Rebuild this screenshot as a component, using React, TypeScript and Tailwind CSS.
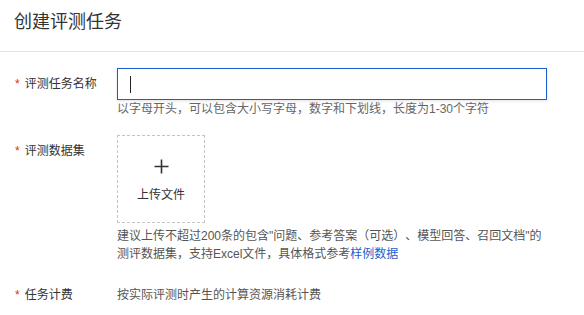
import React from "react";

const font = { fontFamily: '"Liberation Sans", "Noto Sans CJK SC", sans-serif' };

function Label({ text }: { text: string }) {
  return (
    <div className="flex h-[32px] items-center pl-[15px]">
      <span className="mr-[5px] text-[12px] leading-none text-[#d93026]">*</span>
      <span className="text-[12px] text-[#333]">{text}</span>
    </div>
  );
}

export default function App() {
  return (
    <div className="h-[315px] w-[584px] bg-white text-[#333] [text-spacing-trim:space-all]" style={font}>
      <div className="h-[52px] border-b border-[#e3e3e3] pl-[14px] pt-[10px]">
        <div className="text-[18px] leading-[24px] text-[#333]">创建评测任务</div>
      </div>
      <div className="pt-[16px]">
        <div className="grid grid-cols-[117px_1fr]">
          <Label text="评测任务名称" />
          <div>
            <div className="flex h-[32px] w-[430px] items-center border border-[#1b5fcc] bg-white pl-[12px] shadow-[0_1px_3px_rgba(0,0,0,0.12)]">
              <div className="h-[17px] w-[1px] bg-[#222]" />
            </div>
            <div className="mt-[1px] text-[12px] leading-[16px] text-[#666]">
              以字母开头，可以包含大小写字母，数字和下划线，长度为1-30个字符
            </div>
          </div>
        </div>
        <div className="mt-[18px] grid grid-cols-[117px_1fr]">
          <Label text="评测数据集" />
          <div>
            <div className="flex h-[88px] w-[88px] flex-col items-center border border-dashed border-[#c4c4c4]">
              <svg className="mt-[23px]" width="15" height="15" viewBox="0 0 15 15">
                <path d="M7.5 0.5 V14.5 M0.5 7.5 H14.5" stroke="#333" strokeWidth="1.6" />
              </svg>
              <div className="mt-[13px] text-[12px] leading-[16px] text-[#333]">上传文件</div>
            </div>
            <div className="mt-[4px] whitespace-nowrap text-[12px] leading-[18px] text-[#555]">
              建议上传不超过200条的包含"问题、参考答案（可选）、模型回答、召回文档"的
              <br />
              测评数据集，支持Excel文件，具体格式参考<span className="text-[#1b5fcc]">样例数据</span>
            </div>
          </div>
        </div>
        <div className="mt-[16px] grid grid-cols-[117px_1fr]">
          <Label text="任务计费" />
          <div className="flex h-[32px] items-center text-[12px] text-[#555]">
            按实际评测时产生的计算资源消耗计费
          </div>
        </div>
      </div>
    </div>
  );
}
